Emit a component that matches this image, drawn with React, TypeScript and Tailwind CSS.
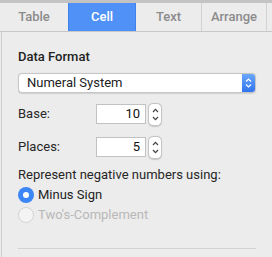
import React from "react";

const tabs = ["Table", "Cell", "Text", "Arrange"];

function Stepper() {
  return (
    <div className="ml-[2px] flex h-[23px] w-[14px] flex-col items-center justify-center gap-[3px] rounded-[5px] border border-[#c4c4c4] bg-white shadow-[0_0.5px_1px_rgba(0,0,0,0.15)]">
      <svg width="7" height="5" viewBox="0 0 7 5" fill="none" stroke="#444" strokeWidth="1.2">
        <path d="M1 4 L3.5 1.3 L6 4" />
      </svg>
      <svg width="7" height="5" viewBox="0 0 7 5" fill="none" stroke="#444" strokeWidth="1.2">
        <path d="M1 1 L3.5 3.7 L6 1" />
      </svg>
    </div>
  );
}

function NumberRow({ label, value }: { label: string; value: string }) {
  return (
    <div className="flex h-[20px] items-center">
      <div className="w-[78px] text-[#262626]">{label}</div>
      <div className="flex h-[20px] w-[50px] items-center justify-end border border-[#c2c2c2] bg-white pr-[5px] text-[#111]">
        {value}
      </div>
      <Stepper />
    </div>
  );
}

export default function App() {
  return (
    <div
      className="h-[257px] w-[272px] overflow-hidden bg-[#ececec] text-[13px] leading-[16px]"
      style={{ fontFamily: "Roboto, 'Liberation Sans', sans-serif" }}
    >
      <div className="h-[3px] bg-[#c3c3c3]" />
      <div className="flex h-[29px] border-b border-[#c8c8c8]">
        {tabs.map((t, i) =>
          t === "Cell" ? (
            <div
              key={t}
              className="flex w-[68px] items-center justify-center border-x border-[#3f82ee] bg-[#4f91f6] font-medium text-white"
            >
              {t}
            </div>
          ) : (
            <div
              key={t}
              className={
                "flex items-center justify-center font-medium text-[#8b8b8b] " +
                (i === 0 ? "w-[68px]" : i === 2 ? "w-[66px] border-r border-[#d2d2d2]" : "w-[65px] border-r border-[#d2d2d2]")
              }
            >
              {t}
            </div>
          )
        )}
      </div>
      <div className="ml-[1px] h-[225px] border-l border-[#cfcfcf] pl-[16px] pr-[14px]">
        <div className="pt-[17px] font-medium text-[#222]">Data Format</div>
        <div className="mt-[8px] flex h-[20px] w-[238px] overflow-hidden rounded-[4px] border border-[#c6c6c6] bg-white shadow-[0_0.5px_1px_rgba(0,0,0,0.12)]">
          <div className="flex flex-1 items-center pl-[8px] text-[#222]">Numeral System</div>
          <div className="flex w-[13px] flex-col items-center justify-center gap-[2px] bg-gradient-to-b from-[#6aa6f9] to-[#2f74f0]">
            <svg width="7" height="4" viewBox="0 0 7 4" fill="none" stroke="white" strokeWidth="1.2">
              <path d="M1 3.5 L3.5 1 L6 3.5" />
            </svg>
            <svg width="7" height="4" viewBox="0 0 7 4" fill="none" stroke="white" strokeWidth="1.2">
              <path d="M1 0.5 L3.5 3 L6 0.5" />
            </svg>
          </div>
        </div>
        <div className="mt-[11px]">
          <NumberRow label="Base:" value="10" />
        </div>
        <div className="mt-[13px]">
          <NumberRow label="Places:" value="5" />
        </div>
        <div className="mt-[10px] text-[#262626]">Represent negative numbers using:</div>
        <div className="mt-[4px] flex items-center gap-[4px] text-[#222]">
          <div className="flex h-[16px] w-[16px] items-center justify-center rounded-full bg-[#3d86f6]">
            <div className="h-[6px] w-[6px] rounded-full bg-white" />
          </div>
          Minus Sign
        </div>
        <div className="mt-[4px] flex items-center gap-[4px] text-[#b8b8b8]">
          <div className="h-[16px] w-[16px] rounded-full border border-[#d4d4d4] bg-[#f4f4f4]" />
          Two's-Complement
        </div>
        <div className="mt-[25px] w-[238px] border-t border-[#d2d2d2]" />
      </div>
    </div>
  );
}
